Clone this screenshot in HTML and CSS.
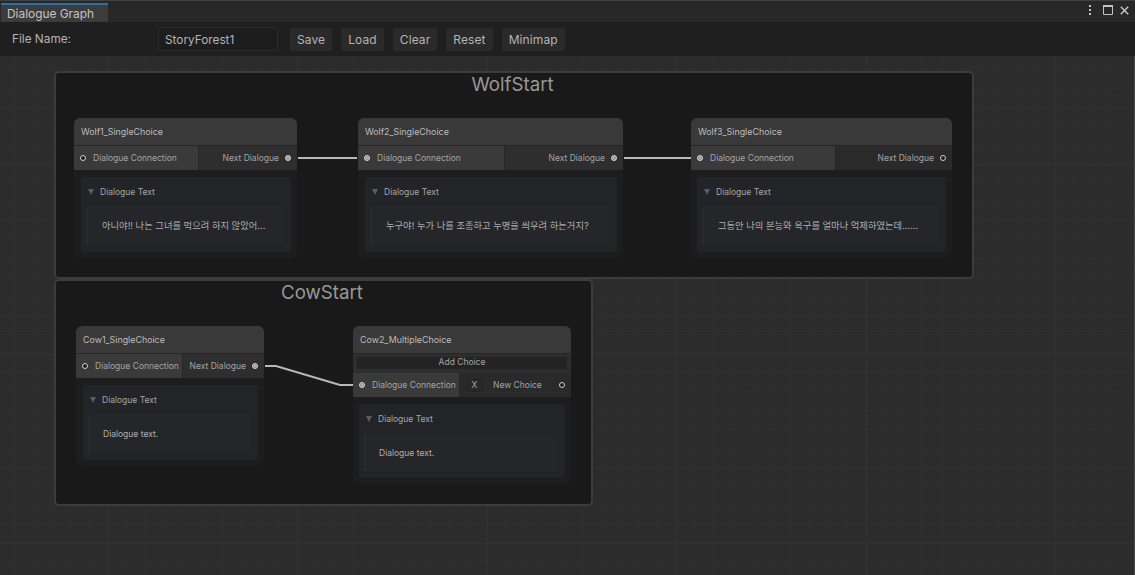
FILE: index.html
```html
<!DOCTYPE html>
<html lang="en">

<head>
    <meta charset="UTF-8">
    <title>Dialogue Graph</title>
    <link rel="stylesheet" href="styles.css">
</head>

<body>
    <div class="tab-bar">
        <div class="tab">Dialogue Graph</div>
        <div class="window-icons">
            <svg width="4" height="10" viewBox="0 0 4 10"><path d="M1 0h2v2H1zM1 4h2v2H1zM1 8h2v2H1z" fill="#c4c4c4"/></svg>
            <svg class="icon-max" width="10" height="10" viewBox="0 0 10 10"><path d="M.5 .5h9v9h-9z" fill="none" stroke="#c4c4c4"/><path d="M0 0h10v2H0z" fill="#c4c4c4"/></svg>
            <svg class="icon-close" width="9" height="9" viewBox="0 0 9 9"><path d="M.8 .8l7.4 7.4M8.2 .8L.8 8.2" fill="none" stroke="#c4c4c4" stroke-width="1.5"/></svg>
        </div>
    </div>

    <div class="toolbar">
        <label class="file-label">File Name:</label>
        <div class="file-input">StoryForest1</div>
        <button class="tool-btn">Save</button>
        <button class="tool-btn">Load</button>
        <button class="tool-btn">Clear</button>
        <button class="tool-btn">Reset</button>
        <button class="tool-btn">Minimap</button>
    </div>

    <div class="canvas">
        <div class="group group-wolf"><div class="group-title">WolfStart</div></div>
        <div class="group group-cow"><div class="group-title">CowStart</div></div>

        <div class="node wolf1">
            <div class="node-title">Wolf1_SingleChoice</div>
            <div class="ports">
                <div class="port-in in-124"><span class="dot"></span>Dialogue Connection</div>
                <div class="port-out">Next Dialogue<span class="dot on"></span></div>
            </div>
            <div class="extension">
                <div class="foldout"><span class="arrow"></span>Dialogue Text</div>
                <div class="text-field korean">아니야!! 나는 그녀를 먹으려 하지 않았어...</div>
            </div>
        </div>

        <div class="node wolf2">
            <div class="node-title">Wolf2_SingleChoice</div>
            <div class="ports">
                <div class="port-in in-146"><span class="dot on"></span>Dialogue Connection</div>
                <div class="port-out">Next Dialogue<span class="dot on"></span></div>
            </div>
            <div class="extension">
                <div class="foldout"><span class="arrow"></span>Dialogue Text</div>
                <div class="text-field korean">누구야! 누가 나를 조종하고 누명을 씌우려 하는거지?</div>
            </div>
        </div>

        <div class="node wolf3">
            <div class="node-title">Wolf3_SingleChoice</div>
            <div class="ports">
                <div class="port-in in-144"><span class="dot on"></span>Dialogue Connection</div>
                <div class="port-out dark">Next Dialogue<span class="dot"></span></div>
            </div>
            <div class="extension narrow">
                <div class="foldout"><span class="arrow"></span>Dialogue Text</div>
                <div class="text-field korean">그동안 나의 본능와 욕구를 얼마나 억제하였는데......</div>
            </div>
        </div>

        <div class="node cow1">
            <div class="node-title">Cow1_SingleChoice</div>
            <div class="ports">
                <div class="port-in in-106"><span class="dot"></span>Dialogue Connection</div>
                <div class="port-out">Next Dialogue<span class="dot on"></span></div>
            </div>
            <div class="extension">
                <div class="foldout"><span class="arrow"></span>Dialogue Text</div>
                <div class="text-field">Dialogue text.</div>
            </div>
        </div>

        <div class="node cow2">
            <div class="node-title">Cow2_MultipleChoice</div>
            <div class="add-row"><div class="add-choice">Add Choice</div></div>
            <div class="ports">
                <div class="port-in in-106"><span class="dot on"></span>Dialogue Connection</div>
                <div class="port-out dark choice">
                    <span class="x-btn">X</span>
                    <span class="choice-name">New Choice</span>
                    <span class="dot"></span>
                </div>
            </div>
            <div class="extension narrow">
                <div class="foldout"><span class="arrow"></span>Dialogue Text</div>
                <div class="text-field">Dialogue text.</div>
            </div>
        </div>

        <svg class="edges" width="1135" height="519" viewBox="0 0 1135 519">
            <path d="M298 102H357M624 102H691M265 310H276L340 329H353" fill="none" stroke="#b8b8b8" stroke-width="2"/>
        </svg>
    </div>
</body>

</html>
```

FILE: styles.css
```css
* {
    box-sizing: border-box;
}

html,
body {
    margin: 0;
    height: 100%;
    overflow: hidden;
}

body {
    font-family: Inter, "Noto Sans CJK KR", sans-serif;
    background: #282828;
    color: #b4b4b4;
    display: flex;
    flex-direction: column;
}

.tab-bar {
    height: 22px;
    flex: none;
    display: flex;
    justify-content: space-between;
    padding: 2px 0 0 1px;
    border-top: 1px solid #404040;
    background: #282828;
}

.tab {
    width: 107px;
    height: 19px;
    padding-left: 6px;
    border-top: 2px solid #2c6ea8;
    background: #3c3c3c;
    color: #c4c4c4;
    font-size: 11.9px;
    line-height: 17px;
}

.window-icons {
    display: flex;
    align-items: center;
    padding: 0 6px 5px 0;
}

.icon-max {
    margin: 0 7px 0 11px;
}

.toolbar {
    height: 34px;
    flex: none;
    display: flex;
    align-items: center;
    padding-left: 12px;
    background: #1f1f1f;
    font-size: 11.8px;
}

.file-label {
    width: 146px;
    padding-bottom: 1px;
}

.file-input {
    width: 120px;
    height: 24px;
    margin-right: 12px;
    padding-left: 6px;
    border: 1px solid #2c2c2c;
    border-radius: 4px;
    background: #1d1d1d;
    line-height: 24px;
}

.tool-btn {
    height: 23px;
    margin-right: 9px;
    padding: 0 7px;
    border: none;
    border-radius: 2px;
    background: #2a2a2a;
    color: #b4b4b4;
    font: inherit;
    font-size: 12px;
    letter-spacing: .1px;
}

.canvas {
    position: relative;
    flex: 1;
    border-right: 1px solid #4a4a4a;
    background-color: #2c2c2c;
    background-image:
        linear-gradient(#323232 1px, transparent 1px),
        linear-gradient(90deg, #323232 1px, transparent 1px),
        linear-gradient(#2f2f2f 1px, transparent 1px),
        linear-gradient(90deg, #2f2f2f 1px, transparent 1px);
    background-size: 189.5px 189.5px, 189.5px 189.5px, 18.95px 18.95px, 18.95px 18.95px;
    background-position: 108px 108px, 108px 108px, 13px 13px, 13px 13px;
}

/* groups and nodes sit on the free graph canvas */
.group {
    position: absolute;
    border: 2px solid #3c3c3c;
    border-radius: 5px;
    background: #191919;
}

.group-wolf {
    left: 54px;
    top: 15px;
    width: 920px;
    height: 208px;
}

.group-cow {
    left: 54px;
    top: 223px;
    width: 539px;
    height: 227px;
}

.group-title {
    padding-right: 3px;
    font-size: 18.7px;
    line-height: 24px;
    text-align: center;
    color: #989898;
}

.node {
    position: absolute;
    display: flex;
    flex-direction: column;
    border-radius: 6px;
    background: #1d1d1d;
    font-size: 8.5px;
    color: #a4a4a4;
}

.wolf1 {
    left: 74px;
    top: 62px;
    width: 223px;
    height: 140px;
}

.wolf2 {
    left: 358px;
    top: 62px;
    width: 265px;
    height: 140px;
}

.wolf3 {
    left: 691px;
    top: 62px;
    width: 261px;
    height: 140px;
}

.cow1 {
    left: 76px;
    top: 270px;
    width: 188px;
    height: 140px;
}

.cow2 {
    left: 353px;
    top: 270px;
    width: 218px;
    height: 158px;
}

.node-title {
    height: 28px;
    flex: none;
    padding-left: 7px;
    border-bottom: 1px solid #262626;
    border-radius: 6px 6px 0 0;
    background: #393939;
    color: #bcbcbc;
    line-height: 28px;
    font-size: 8.9px;
}

.ports {
    height: 24px;
    flex: none;
    display: flex;
}

.port-in {
    flex: none;
    display: flex;
    align-items: center;
    gap: 7px;
    padding-left: 6px;
    background: #3a3a3a;
    white-space: nowrap;
}

.in-124 {
    width: 124px;
}

.in-146 {
    width: 146px;
}

.in-144 {
    width: 144px;
}

.in-106 {
    width: 106px;
}

.port-out {
    flex: 1;
    display: flex;
    align-items: center;
    justify-content: flex-end;
    gap: 6px;
    padding-right: 6px;
    border-left: 1px solid #272727;
    background: #2e2e2e;
    white-space: nowrap;
}

.port-out.dark {
    background: #2a2a2a;
}

.choice {
    justify-content: flex-start;
    padding-left: 6px;
    gap: 0;
}

.x-btn {
    width: 17px;
    height: 13px;
    margin-right: 10px;
    border: 1px solid #222222;
    border-radius: 2px;
    background: #282828;
    text-align: center;
    line-height: 11px;
}

.choice-name {
    flex: 1;
}

.dot {
    width: 6px;
    height: 6px;
    flex: none;
    border: 1px solid #d0d0d0;
    border-radius: 50%;
    background: #1e1e1e;
}

.dot.on {
    background: #c4c4c4;
    outline: 1px solid #8a8a8a;
    outline-offset: -2px;
}

.add-row {
    height: 19px;
    flex: none;
    padding: 3px 4px 2px;
    background: #2e2e2e;
}

.add-choice {
    height: 12px;
    background: #232323;
    text-align: center;
    line-height: 11px;
}

.extension {
    flex: 1;
    margin: 7px 6px 6px 7px;
    padding: 0 8px 7px 5px;
    border-radius: 3px;
    background: #232427;
}

.extension.narrow {
    margin-left: 6px;
}

.foldout {
    height: 30px;
    display: flex;
    align-items: center;
    padding-left: 2px;
    gap: 6px;
}

.arrow {
    width: 0;
    height: 0;
    border-left: 3px solid transparent;
    border-right: 3px solid transparent;
    border-top: 6px solid #5c5c5c;
}

.text-field {
    height: 37px;
    padding-left: 13px;
    border-left: 2px solid #292b2e;
    background: #25262a;
    color: #aeaeae;
    line-height: 39px;
    white-space: nowrap;
}

.korean {
    padding-left: 14px;
    font-size: 9.3px;
    line-height: 37px;
}

.edges {
    position: absolute;
    left: 0;
    top: 0;
}
```
